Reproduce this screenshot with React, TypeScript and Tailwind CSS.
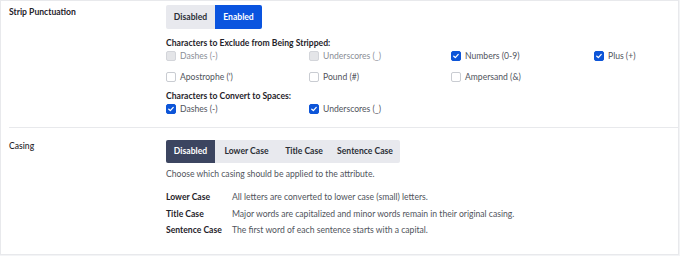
import React from "react";

type Box = { label: string; state: "disabled" | "off" | "on" };

const exclude: Box[] = [
    { label: "Dashes (-)", state: "disabled" },
    { label: "Underscores (_)", state: "disabled" },
    { label: "Numbers (0-9)", state: "on" },
    { label: "Plus (+)", state: "on" },
    { label: "Apostrophe (')", state: "off" },
    { label: "Pound (#)", state: "off" },
    { label: "Ampersand (&)", state: "off" },
];

const convert: Box[] = [
    { label: "Dashes (-)", state: "on" },
    { label: "Underscores (_)", state: "on" },
];

const casings = [
    { term: "Lower Case", desc: "All letters are converted to lower case (small) letters." },
    { term: "Title Case", desc: "Major words are capitalized and minor words remain in their original casing." },
    { term: "Sentence Case", desc: "The first word of each sentence starts with a capital." },
];

const Check = ({ box }: { box: Box }) => {
    const boxClass =
        box.state === "on"
            ? "bg-[#0d55d8] border-[#0d55d8]"
            : box.state === "disabled"
                ? "bg-[#e4e5e8] border-[#d3d5da]"
                : "bg-white border-[#c9ccd2]";
    return (
        <div className="flex items-center h-[13px]">
            <span className={`w-[10px] h-[10px] rounded-[2px] border flex items-center justify-center shrink-0 ${boxClass}`}>
                {box.state === "on" && (
                    <svg viewBox="0 0 10 10" className="w-[8px] h-[8px]">
                        <path d="M2.2 5.2 L4.2 7 L7.8 3" fill="none" stroke="white" strokeWidth="1.6" strokeLinecap="round" strokeLinejoin="round" />
                    </svg>
                )}
            </span>
            <span className={`ml-[4px] ${box.state === "disabled" ? "text-[#8a8e96]" : "text-[#50545c]"}`}>{box.label}</span>
        </div>
    );
};

export default function App() {
    return (
        <div className="w-[680px] h-[256px] bg-[#f3f4f6]">
            <div
                className="w-[679px] h-[255px] bg-white border border-[#e8e9ec] text-[8.6px] leading-[13px] text-[#2b2f36]"
                style={{ fontFamily: 'Lato, sans-serif' }}
            >
                {/* Strip punctuation */}
                <div className="ml-[8px] border-b border-[#e8e9ec] flex pt-[4px] pb-[11px]">
                    <div className="w-[157px] pt-[0.5px] font-bold text-[#1f232a]">Strip Punctuation</div>
                    <div className="flex-1">
                        <div className="flex h-[24px] font-bold">
                            <span className="w-[49px] flex items-center justify-center bg-[#e8e9ee] text-[#2b2f36] rounded-l-[2px]">Disabled</span>
                            <span className="w-[47px] flex items-center justify-center bg-[#0a54df] text-white rounded-r-[2px]">Enabled</span>
                        </div>
                        <div className="mt-[7.5px] font-bold text-[#1f232a]">Characters to Exclude from Being Stripped:</div>
                        <div className="grid grid-cols-[143px_142px_143px_1fr] gap-y-[8px]">
                            {exclude.map((b) => (
                                <Check key={b.label} box={b} />
                            ))}
                        </div>
                        <div className="mt-[6px] font-bold text-[#1f232a]">Characters to Convert to Spaces:</div>
                        <div className="grid grid-cols-[143px_1fr]">
                            {convert.map((b) => (
                                <Check key={b.label} box={b} />
                            ))}
                        </div>
                    </div>
                </div>

                {/* Casing */}
                <div className="ml-[8px] flex pt-[12px]">
                    <div className="w-[157px] pt-[0.5px] font-medium text-[#1f232a]">Casing</div>
                    <div className="flex-1">
                        <div className="flex h-[23px] font-bold w-fit bg-[#e8e9ee] rounded-[2px]">
                            <span className="w-[49px] flex items-center justify-center bg-[#3c4560] text-white rounded-l-[2px]">Disabled</span>
                            <span className="w-[63px] flex items-center justify-center">Lower Case</span>
                            <span className="w-[52px] flex items-center justify-center">Title Case</span>
                            <span className="w-[70px] flex items-center justify-center">Sentence Case</span>
                        </div>
                        <div className="mt-[5.5px] text-[#50545c]">Choose which casing should be applied to the attribute.</div>
                        <div className="mt-[10px] flex flex-col gap-[3.5px]">
                            {casings.map((c) => (
                                <div key={c.term} className="flex">
                                    <span className="w-[66px] font-bold text-[#1f232a]">{c.term}</span>
                                    <span className="text-[#50545c]">{c.desc}</span>
                                </div>
                            ))}
                        </div>
                    </div>
                </div>
            </div>
        </div>
    );
}
